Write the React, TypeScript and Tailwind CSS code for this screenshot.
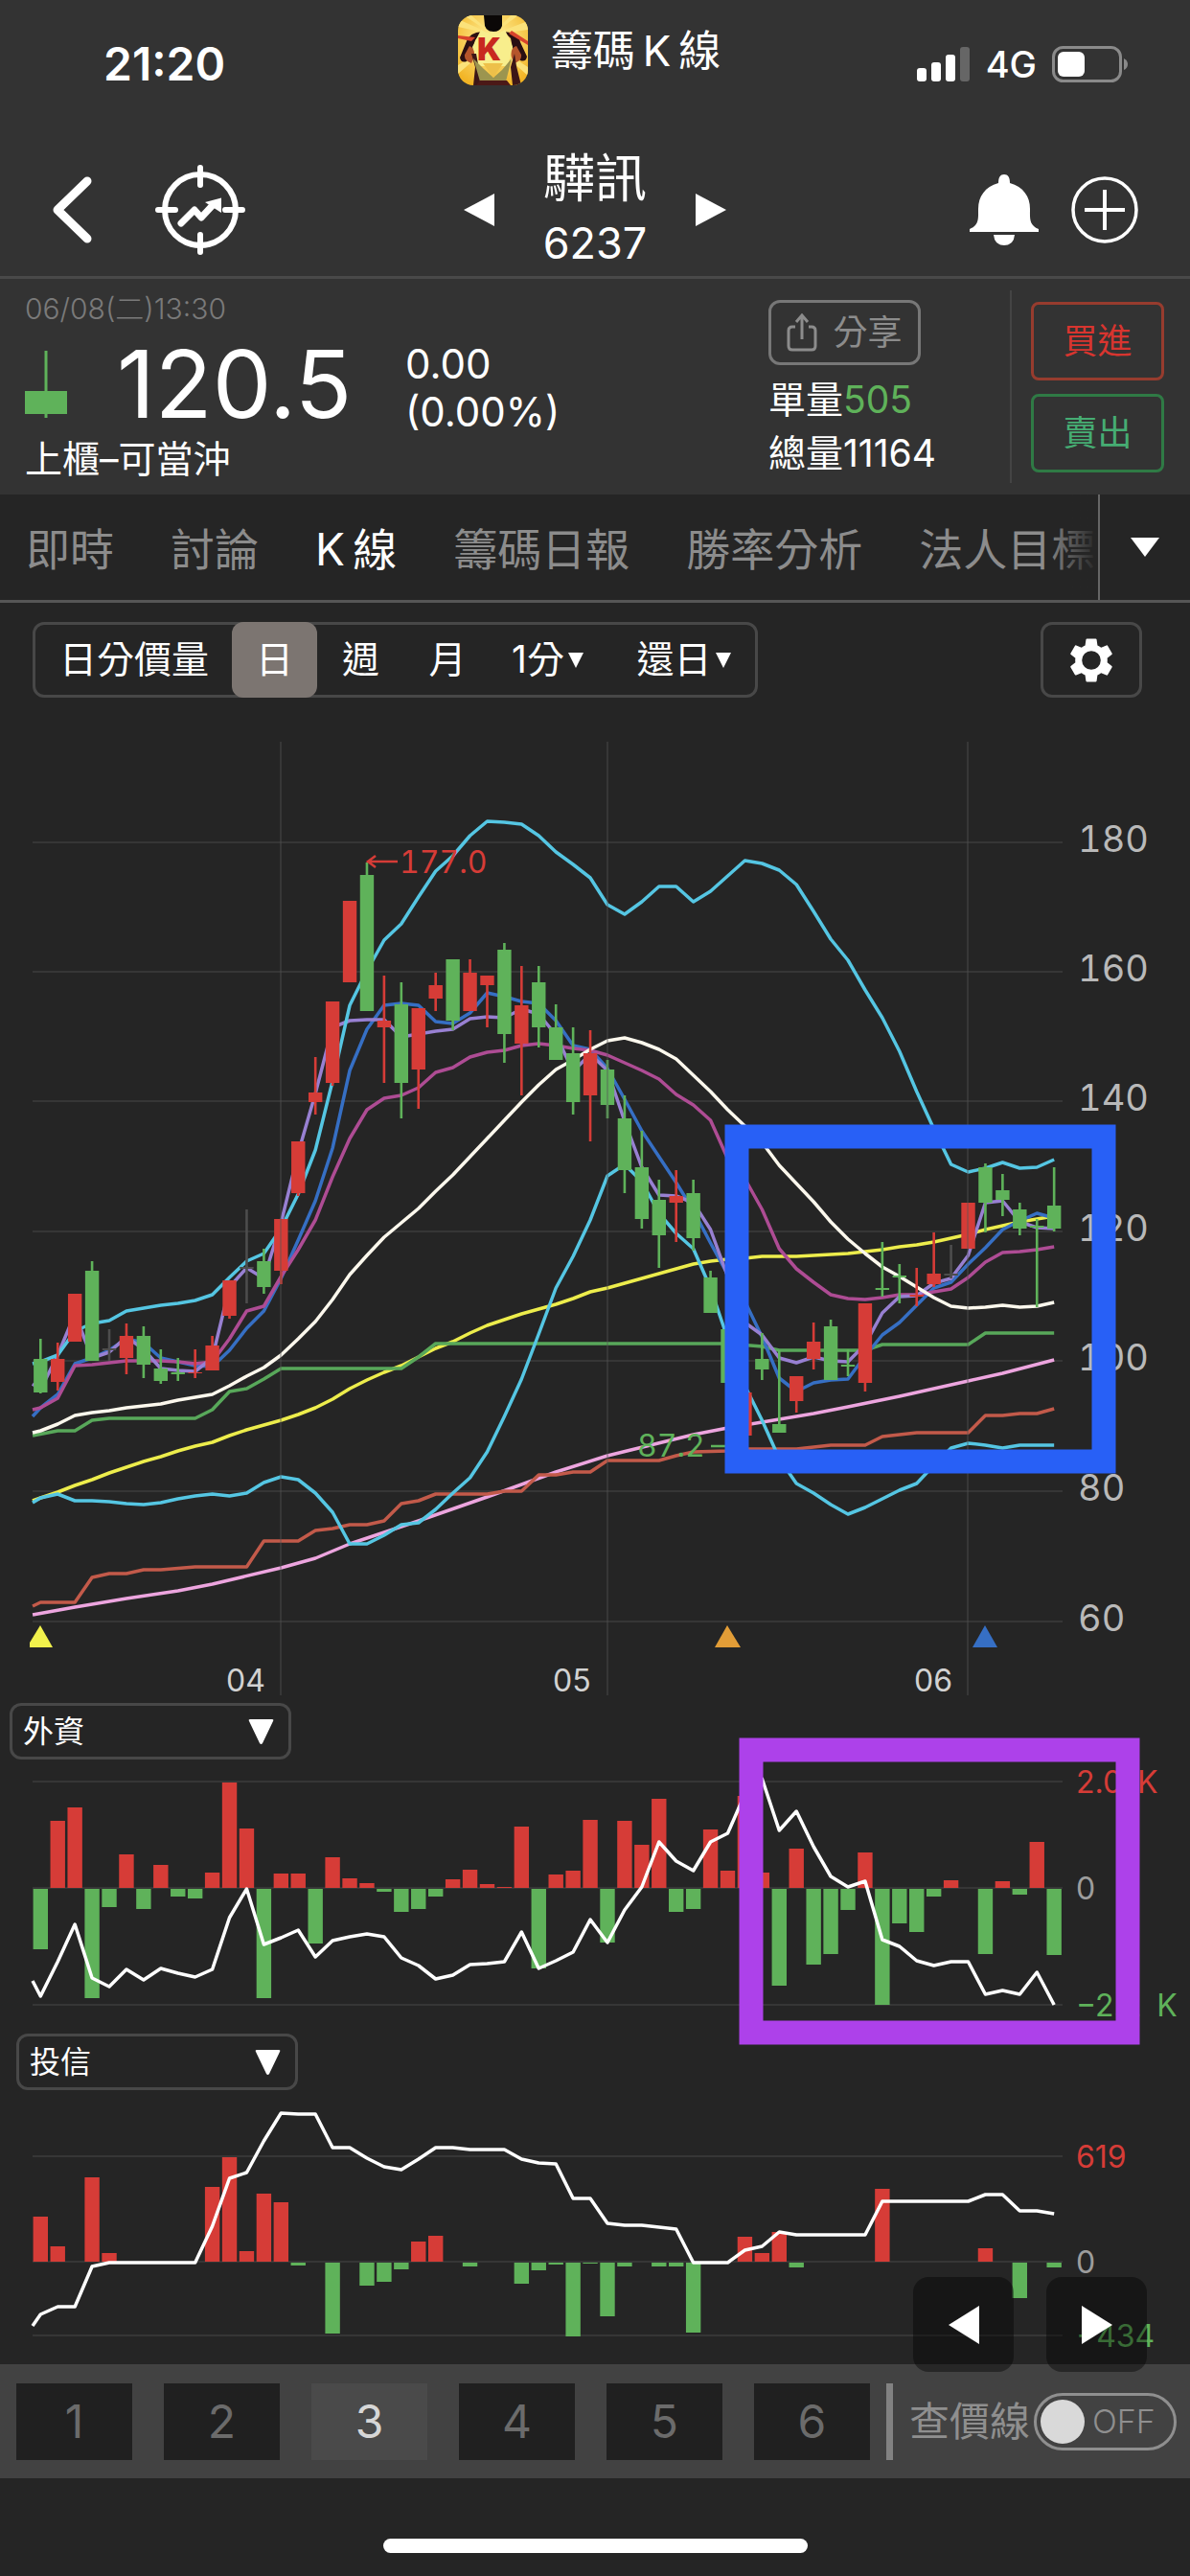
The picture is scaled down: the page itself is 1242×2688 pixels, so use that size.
import { useState } from "react"
import type { ReactNode } from "react"

const RED = "#d63c37"
const GREEN = "#5fb25a"
const GRAY = "#4d4d4d"
const CYAN = "#55c6e3"

const FIRST_X = 42.3
const STEP = 17.93
const LEFT = 34
const RIGHT = 1109

const xAt = (i: number) => FIRST_X + i * STEP

// [high, body top, body bottom, low, kind]
type Candle = [number, number, number, number, "r" | "g" | "n"]

const candles: Candle[] = [
  [1397, 1418, 1453, 1454, "g"],
  [1401, 1418, 1442, 1451, "r"],
  [1350, 1350, 1400, 1400, "r"],
  [1316, 1326, 1420, 1420, "g"],
  [1387, 1407, 1409, 1420, "n"],
  [1381, 1394, 1417, 1434, "r"],
  [1384, 1394, 1424, 1438, "g"],
  [1408, 1428, 1441, 1444, "g"],
  [1417, 1432, 1434, 1441, "g"],
  [1408, 1432, 1433, 1438, "r"],
  [1394, 1404, 1430, 1430, "r"],
  [1336, 1336, 1373, 1376, "r"],
  [1262, 1322, 1324, 1360, "n"],
  [1303, 1316, 1343, 1350, "g"],
  [1272, 1272, 1326, 1340, "r"],
  [1191, 1191, 1245, 1248, "r"],
  [1103, 1140, 1150, 1163, "r"],
  [1045, 1045, 1130, 1133, "r"],
  [940, 940, 1025, 1025, "r"],
  [900, 913, 1055, 1055, "g"],
  [1018, 1065, 1072, 1130, "r"],
  [1025, 1048, 1130, 1167, "g"],
  [1052, 1052, 1116, 1157, "r"],
  [1015, 1028, 1042, 1055, "r"],
  [1001, 1001, 1065, 1075, "g"],
  [1001, 1015, 1055, 1055, "r"],
  [1018, 1018, 1028, 1072, "r"],
  [984, 991, 1079, 1109, "g"],
  [1008, 1049, 1089, 1143, "r"],
  [1008, 1025, 1072, 1093, "g"],
  [1048, 1072, 1106, 1106, "g"],
  [1072, 1099, 1150, 1163, "g"],
  [1075, 1099, 1143, 1191, "r"],
  [1106, 1116, 1153, 1167, "g"],
  [1143, 1167, 1221, 1245, "g"],
  [1180, 1218, 1272, 1282, "g"],
  [1231, 1252, 1289, 1323, "g"],
  [1221, 1248, 1255, 1296, "r"],
  [1231, 1245, 1292, 1305, "g"],
  [1326, 1333, 1370, 1370, "g"],
  [1387, 1387, 1443, 1443, "g"],
  [1453, 1453, 1498, 1498, "r"],
  [1391, 1418, 1429, 1440, "g"],
  [1409, 1486, 1495, 1495, "g"],
  [1436, 1436, 1462, 1474, "r"],
  [1380, 1400, 1418, 1429, "r"],
  [1377, 1384, 1440, 1440, "g"],
  [1408, 1424, 1426, 1436, "g"],
  [1360, 1360, 1443, 1452, "r"],
  [1296, 1344, 1346, 1353, "g"],
  [1319, 1331, 1333, 1360, "g"],
  [1323, 1351, 1353, 1363, "r"],
  [1286, 1329, 1340, 1343, "r"],
  [1299, 1329, 1331, 1334, "n"],
  [1255, 1255, 1303, 1303, "r"],
  [1214, 1218, 1255, 1286, "g"],
  [1225, 1242, 1252, 1269, "g"],
  [1255, 1262, 1282, 1289, "g"],
  [1272, 1279, 1281, 1364, "g"],
  [1218, 1258, 1282, 1285, "g"],
]

// The first value of each series sits on the left edge of the plot, the rest one per candle
const upperBand = [
  1423, 1421, 1414, 1389, 1381, 1378, 1368, 1365, 1362, 1360, 1357, 1351, 1333, 1316, 1308, 1282, 1246, 1200, 1128,
  1049, 1013, 981, 964, 936, 909, 893, 872, 857, 858, 860, 872, 889, 902, 916, 944, 954, 941, 925, 925, 941, 930, 914,
  898, 901, 908, 923, 951, 980, 1002, 1033, 1062, 1097, 1139, 1178, 1215, 1223, 1219, 1213, 1219, 1218, 1210,
]
const lowerBand = [
  1568, 1563, 1559, 1566, 1566, 1567, 1569, 1570, 1568, 1564, 1561, 1559, 1561, 1558, 1547, 1541, 1544, 1558, 1578,
  1611, 1611, 1602, 1591, 1589, 1575, 1558, 1542, 1515, 1478, 1439, 1392, 1344, 1311, 1273, 1227, 1215, 1233, 1266,
  1287, 1303, 1344, 1397, 1446, 1482, 1522, 1548, 1558, 1570, 1580, 1573, 1564, 1555, 1548, 1529, 1511, 1506, 1508,
  1511, 1508, 1508, 1508,
]
const ma5 = [
  1444, 1450, 1414, 1371, 1417, 1411, 1395, 1408, 1428, 1430, 1431, 1417, 1343, 1323, 1334, 1276, 1203, 1141, 1072,
  1065, 1064, 1064, 1082, 1079, 1076, 1074, 1063, 1061, 1062, 1053, 1058, 1080, 1118, 1100, 1117, 1170, 1218, 1247,
  1248, 1255, 1283, 1332, 1380, 1393, 1417, 1422, 1416, 1420, 1421, 1403, 1370, 1353, 1352, 1339, 1334, 1310, 1255,
  1253, 1275, 1281, 1282,
]
const ma10 = [
  1478, 1469, 1455, 1423, 1417, 1409, 1397, 1401, 1417, 1421, 1425, 1426, 1409, 1386, 1368, 1334, 1294, 1253, 1198,
  1117, 1074, 1049, 1047, 1049, 1066, 1068, 1057, 1036, 1040, 1045, 1047, 1065, 1091, 1095, 1115, 1147, 1180, 1207,
  1234, 1263, 1297, 1330, 1358, 1395, 1438, 1452, 1443, 1440, 1439, 1415, 1393, 1380, 1362, 1344, 1338, 1319, 1302,
  1283, 1274, 1266, 1271,
]
const ma20 = [
  1471, 1469, 1459, 1425, 1424, 1422, 1420, 1420, 1420, 1421, 1423, 1421, 1397, 1368, 1363, 1332, 1304, 1273, 1228,
  1188, 1158, 1146, 1143, 1135, 1119, 1114, 1103, 1098, 1096, 1091, 1089, 1091, 1094, 1096, 1101, 1109, 1117, 1126,
  1142, 1153, 1169, 1209, 1230, 1262, 1303, 1324, 1338, 1351, 1355, 1356, 1354, 1351, 1351, 1348, 1345, 1333, 1317,
  1307, 1306, 1304, 1301,
]
const middleBand = [
  1495, 1493, 1486, 1477, 1474, 1472, 1469, 1467, 1465, 1461, 1458, 1455, 1446, 1436, 1427, 1414, 1397, 1379, 1356,
  1330, 1310, 1291, 1276, 1261, 1243, 1226, 1207, 1188, 1169, 1150, 1132, 1116, 1106, 1095, 1086, 1083, 1088, 1095,
  1105, 1122, 1139, 1158, 1175, 1192, 1216, 1235, 1254, 1275, 1293, 1308, 1322, 1332, 1343, 1354, 1363, 1365, 1364,
  1362, 1364, 1363, 1359,
]
const ma60 = [
  1566, 1563, 1557, 1550, 1544, 1537, 1531, 1525, 1520, 1514, 1509, 1505, 1498, 1492, 1487, 1482, 1476, 1469, 1460,
  1449, 1440, 1432, 1425, 1416, 1407, 1400, 1391, 1383, 1377, 1371, 1366, 1361, 1355, 1348, 1344, 1339, 1334, 1329,
  1324, 1319, 1316, 1314, 1313, 1311, 1311, 1311, 1310, 1309, 1308, 1306, 1304, 1301, 1299, 1296, 1292, 1288, 1283,
  1279, 1275, 1272, 1269,
]

// Slow series only list their turning points as [candle, y]
type Pair = [number, number]

const quarterLine: Pair[] = [
  [-0.46, 1498], [1, 1493], [2, 1493], [3, 1482], [4, 1480], [9, 1480], [10, 1471], [11, 1452], [12, 1449], [13, 1439],
  [14, 1428], [21, 1428], [22, 1416], [23, 1402], [40, 1402], [42, 1405], [43, 1409], [48, 1409], [49, 1403], [54, 1403],
  [55, 1391], [59, 1391],
]
const halfYearLine: Pair[] = [
  [-0.46, 1685], [2, 1677], [5, 1668], [8, 1660], [10, 1653], [14, 1636], [16, 1626], [18, 1611], [22, 1587], [26, 1562],
  [30, 1536], [33, 1519], [38, 1497], [40, 1490], [42, 1484], [45, 1475], [47, 1468], [50, 1457], [54, 1441], [56, 1433],
  [59, 1419],
]
const yearLine: Pair[] = [
  [-0.46, 1676], [0, 1672], [2, 1672], [3, 1646], [4, 1642], [5, 1642], [6, 1638], [7, 1638], [9, 1635], [12, 1635],
  [13, 1608], [15, 1608], [16, 1597], [17, 1595], [18, 1591], [19, 1591], [20, 1587], [21, 1569], [22, 1566], [23, 1559],
  [26, 1559], [27, 1556], [28, 1556], [29, 1539], [30, 1539], [31, 1536], [32, 1536], [33, 1524], [36, 1524], [37, 1519],
  [38, 1515], [40, 1514], [41, 1512], [44, 1512], [45, 1510], [46, 1508], [48, 1508], [49, 1499], [50, 1497], [51, 1495],
  [54, 1495], [55, 1477], [56, 1477], [57, 1475], [58, 1475], [59, 1470],
]

const foreignBars = [
  -63, 70, 84, -114, -19, 35, -21, 24, -8, -10, 16, 110, 62, -114, 15, 15, -57, 32, 10, 5, -3, -24, -21, -8, 9, 19, 4, 1,
  64, -83, 14, 18, 71, -56, 70, 45, 93, -24, -21, 61, 18, 96, 16, -101, 41, -79, -68, -22, 37, -121, -36, -45, -8, 8, 0,
  -68, 7, -6, 48, -69,
]
const foreignHolding = [
  2067, 2083, 2047, 2008, 2064, 2073, 2055, 2066, 2054, 2059, 2063, 2055, 2001, 1971, 2029, 2022, 2014, 2042, 2025,
  2021, 2018, 2021, 2043, 2051, 2065, 2061, 2050, 2049, 2047, 2016, 2054, 2046, 2037, 2003, 2027, 1993, 1969, 1922,
  1942, 1952, 1922, 1913, 1872, 1856, 1910, 1890, 1927, 1958, 1969, 1963, 2024, 2031, 2046, 2051, 2047, 2047, 2081,
  2077, 2081, 2058, 2092,
]
const trustBars = [
  47, 16, 0, 88, 9, 0, 0, 0, 0, 0, 78, 109, 11, 71, 62, -3, 0, -74, 0, -24, -20, -7, 21, 27, 0, -4, 0, 0, -22, -8, -2,
  -77, -1, -56, -4, 0, -4, -4, -73, 0, 0, 26, 9, 31, -5, 0, 0, 0, 0, 76, 0, 0, 0, 0, 0, 14, 0, -37, 0, -5,
]
const trustHolding = [
  2427, 2415, 2407, 2407, 2365, 2361, 2361, 2361, 2361, 2361, 2361, 2323, 2273, 2267, 2234, 2205, 2206, 2206, 2241,
  2241, 2252, 2261, 2264, 2253, 2241, 2241, 2243, 2243, 2243, 2253, 2257, 2258, 2294, 2294, 2320, 2322, 2322, 2324,
  2326, 2361, 2361, 2361, 2348, 2344, 2329, 2332, 2332, 2332, 2332, 2332, 2297, 2297, 2297, 2297, 2297, 2297, 2290,
  2290, 2307, 2307, 2310,
]

const priceTicks = [
  { label: "180", y: 879 },
  { label: "160", y: 1014 },
  { label: "140", y: 1149 },
  { label: "120", y: 1285 },
  { label: "100", y: 1420 },
  { label: "80", y: 1556 },
  { label: "60", y: 1692 },
]

const months = [
  { label: "04", x: 293, labelX: 236 },
  { label: "05", x: 634, labelX: 577 },
  { label: "06", x: 1010, labelX: 954 },
]

const toPoints = (ys: number[]) => ys.map((y, i) => `${i === 0 ? LEFT : xAt(i - 1)},${y}`).join(" ")
const pairPoints = (pairs: Pair[]) => pairs.map(([i, y]) => `${xAt(i)},${y}`).join(" ")

function Trace({ points, color, width = 3.5 }: { points: string; color: string; width?: number }) {
  return <polyline points={points} fill="none" stroke={color} strokeWidth={width} strokeLinejoin="round" />
}

function PriceChart() {
  return (
    <svg viewBox="0 728 1242 1049" className="block w-full" role="img" aria-label="K線圖">
      <g stroke="#363636" strokeWidth="2">
        {priceTicks.map((t) => (
          <line key={t.label} x1={LEFT} x2={RIGHT} y1={t.y} y2={t.y} />
        ))}
      </g>

      <Trace points={pairPoints(halfYearLine)} color="#eda5df" />
      <Trace points={pairPoints(yearLine)} color="#c35a4a" />
      <Trace points={toPoints(ma60)} color="#eded4c" />
      <Trace points={pairPoints(quarterLine)} color="#58a85a" />
      <Trace points={toPoints(ma10)} color="#366fc4" />
      <Trace points={toPoints(ma20)} color="#ae4c94" />
      <Trace points={toPoints(ma5)} color="#9880d2" />
      <Trace points={toPoints(upperBand)} color={CYAN} />
      <Trace points={toPoints(lowerBand)} color={CYAN} />
      <Trace points={toPoints(middleBand)} color="#fcf8ed" />

      {candles.map(([high, top, bottom, low, kind], i) => {
        const color = kind === "r" ? RED : kind === "g" ? GREEN : GRAY
        return (
          <g key={i} fill={color}>
            <rect x={xAt(i) - 1.3} y={high} width="2.6" height={low - high} />
            <rect x={xAt(i) - 7.2} y={top} width="14.4" height={bottom - top} />
          </g>
        )
      })}

      {months.map((m) => (
        <g key={m.label}>
          <line x1={m.x} x2={m.x} y1="774" y2="1769" stroke="#555" strokeOpacity=".5" strokeWidth="1.5" />
          <text x={m.labelX} y="1765" fontSize="32" fill="#d2d2d2">
            {m.label}
          </text>
        </g>
      ))}

      <path d="M392 893l-8 6 8 6M385 899h30" fill="none" stroke={RED} strokeWidth="2.5" />
      <text x="417" y="911" fontSize="32" fill={RED} className="tabular-nums">
        177.0
      </text>
      <path d="M742 1509h20" stroke={GREEN} strokeWidth="2.5" />
      <text x="665" y="1520" fontSize="32" fill={GREEN} className="tabular-nums">
        87.2
      </text>

      {priceTicks.map((t) => (
        <text key={t.label} x="1125" y={t.y + 10} fontSize="38" fill="#b9b9b9" className="tabular-nums">
          {t.label}
        </text>
      ))}

      <path d="M31 1719v-5l11-18 13 23z" fill="#f1f14c" />
      <path d="M746 1719l13-23 14 23z" fill="#e29d37" />
      <path d="M1015 1719l13-23 13 23z" fill="#366fc4" />

      <rect x="769" y="1186" width="383" height="339" fill="none" stroke="#2860f6" strokeWidth="25" />
    </svg>
  )
}

type FlowChartProps = {
  top: number
  zero: number
  grid: [number, number]
  bars: number[]
  line: number[]
  labels: [string, string, string]
  name: string
  children?: ReactNode
}

function FlowChart({ top, zero, grid, bars, line, labels, name, children }: FlowChartProps) {
  return (
    <svg viewBox={`0 ${top} 1242 286`} className="block w-full overflow-visible" role="img" aria-label={name}>
      <g stroke="#363636" strokeWidth="2">
        {[grid[0], zero, grid[1]].map((y) => (
          <line key={y} x1={LEFT} x2={RIGHT} y1={y} y2={y} />
        ))}
      </g>
      {bars.map((v, i) =>
        v === 0 ? null : (
          <rect
            key={i}
            x={xAt(i) - 7.7}
            y={v > 0 ? zero - v : zero + 1}
            width="15.4"
            height={Math.abs(v)}
            fill={v > 0 ? RED : GREEN}
          />
        ),
      )}
      <Trace points={toPoints(line)} color="#fff" />
      <g fontSize="32">
        <text x="1123" y={grid[0] + 12} fill={RED}>
          {labels[0]}
        </text>
        <text x="1123" y={zero + 12} fill="#9d9d9d">
          {labels[1]}
        </text>
        <text x="1123" y={grid[1] + 12} fill={GREEN}>
          {labels[2]}
        </text>
      </g>
      {children}
    </svg>
  )
}

function IndicatorSelect({ options, label }: { options: string[]; label: string }) {
  return (
    <div className="relative h-[59px] w-[294px]">
      <select
        aria-label={label}
        className="h-full w-full appearance-none rounded-xl border-[3px] border-[#484848] bg-[#252525] pl-[11px] text-[32px] leading-none text-white"
      >
        {options.map((o) => (
          <option key={o}>{o}</option>
        ))}
      </select>
      <svg viewBox="0 0 27 28" className="pointer-events-none absolute top-4 right-[18px] h-7 w-[27px]">
        <path d="M2 1h23q2 0 1 2L15 26q-1.500 2-3 0L1 3q-1-2 1-2z" fill="#fff" />
      </svg>
    </div>
  )
}

function Triangle({ dir, className }: { dir: "left" | "right"; className: string }) {
  return (
    <svg viewBox="0 0 32 40" preserveAspectRatio="none" className={className}>
      <path d={dir === "left" ? "M32 0v40L0 20z" : "M0 0v40l32-20z"} fill="#fff" />
    </svg>
  )
}

function AppIcon() {
  return (
    <svg viewBox="0 0 73 73" className="size-[73px] rounded-2xl">
      <defs>
        <radialGradient id="sun" cx=".5" cy=".35" r=".7">
          <stop offset="0" stopColor="#fff3a0" />
          <stop offset="1" stopColor="#f2b424" />
        </radialGradient>
      </defs>
      <rect width="73" height="73" fill="url(#sun)" />
      <path
        d="M36 20L0 4v8zM36 20L14 0h-8zM36 20L55 0h8zM36 20l37-14v9zM36 30L0 52v9zM36 30l37 24v9z"
        fill="#fbe27a"
      />
      <path d="M27 0h19v11q-2 6-9 6t-9-6z" fill="#0b0807" />
      <path d="M25 17q-13 1-16 10L2 44q1 6 7 4l5-7 4-15zM48 17q15 1 17 11l7 15q-1 6-7 4l-7-8-3-15z" fill="#2a0f12" />
      <path d="M0 24l14 3 4-4-18-2zM73 27l-17-11-3 3 20 12z" fill="#d8432c" />
      <path d="M24 15q13 8 25 0l8 18-5 20H20l-5-20z" fill="#f8ee8c" />
      <path d="M12 32q6 2 5 12l-3 6q-8-3-7-9zM61 32q-7 2-5 12l3 6q8-3 7-9z" fill="#b5552b" />
      <path d="M14 40l4 14-2 19h9l-6-33zM59 40l-4 14 2 19h9l-5-20z" fill="#3c1617" />
      <path d="M16 45l7 24h27l6-24-10 12-9 8-10-9z" fill="#9c954f" />
      <path d="M26 50l11 15 10-15z" fill="#edc04a" />
      <path d="M19 73l4-5h28l4 5z" fill="#4b1917" />
      <text x="20" y="47" fontSize="33" fontWeight="900" fill="#c8281f">
        K
      </text>
    </svg>
  )
}

function StatusBar() {
  return (
    <div className="grid h-[134px] grid-cols-[1fr_auto_1fr] items-center px-16">
      <span className="pl-11 text-[48px] leading-none font-semibold">21:20</span>
      <div className="flex items-center gap-6 self-start pt-4 pr-3">
        <AppIcon />
        <span className="text-[44px] leading-[60px] whitespace-nowrap">籌碼{"\u2009"}K{"\u2009"}線</span>
      </div>
      <div className="flex items-center gap-4 justify-self-end">
        <svg viewBox="0 0 56 36" className="h-9 w-14">
          <rect y="22" width="10" height="14" rx="3" fill="#fff" />
          <rect x="15" y="16" width="10" height="20" rx="3" fill="#fff" />
          <rect x="30" y="8" width="10" height="28" rx="3" fill="#fff" />
          <rect x="45" width="10" height="36" rx="3" fill="#666" />
        </svg>
        <span className="text-[38px] leading-none font-medium">4G</span>
        <svg viewBox="0 0 80 38" className="h-[38px] w-20">
          <rect x="1.500" y="1.500" width="70" height="35" rx="10" fill="none" stroke="#8a8a8a" strokeWidth="3" />
          <path d="M75 13q4 2 4 6t-4 6z" fill="#8a8a8a" />
          <rect x="6" y="6" width="28" height="26" rx="6" fill="#fff" />
        </svg>
      </div>
    </div>
  )
}

function NavBar() {
  return (
    <div className="grid h-[157px] grid-cols-[1fr_auto_1fr] items-center border-b-[3px] border-[#494949] px-[54px] pt-4">
      <div className="flex items-center gap-[66px]">
        <button aria-label="返回">
          <svg viewBox="0 0 42 70" className="h-[70px] w-[42px]">
            <path d="M37 5L6 35l31 30" fill="none" stroke="#fff" strokeWidth="9" strokeLinecap="round" strokeLinejoin="round" />
          </svg>
        </button>
        <button aria-label="目標">
          <svg viewBox="0 0 94 94" className="size-[94px]">
            <circle cx="47" cy="47" r="37" fill="none" stroke="#fff" strokeWidth="6" />
            <path d="M47 3v18M47 73v18M3 47h18M73 47h18" stroke="#fff" strokeWidth="6" strokeLinecap="round" />
            <path d="M27 61l14-14 7 8 13-14" fill="none" stroke="#fff" strokeWidth="7" strokeLinecap="round" strokeLinejoin="round" />
            <path d="M52 39l17-4.500V50z" fill="#fff" />
          </svg>
        </button>
      </div>
      <div className="flex items-center gap-[51px]">
        <button aria-label="上一檔">
          <Triangle dir="left" className="h-[34px] w-8" />
        </button>
        <h1 className="pt-1 text-center font-normal">
          <span className="block text-[54px] leading-[66px]">驊訊</span>
          <span className="block text-[45px] leading-[68px]">6237</span>
        </h1>
        <button aria-label="下一檔">
          <Triangle dir="right" className="h-[34px] w-8" />
        </button>
      </div>
      <div className="flex items-center gap-[34px] justify-self-end">
        <button aria-label="通知">
          <svg viewBox="0 0 72 74" className="h-[74px] w-[72px]">
            <path
              d="M36 0c4 0 6 3 6 9 14 4 21 14 21 27 0 10-1 17 9 21v3H0v-3c10-4 9-11 9-21C9 23 16 13 30 9c0-6 2-9 6-9zM25 63h22q-1 11-11 11T25 63z"
              fill="#fff"
            />
          </svg>
        </button>
        <button aria-label="加入自選">
          <svg viewBox="0 0 70 70" className="size-[70px]">
            <circle cx="35" cy="35" r="33" fill="none" stroke="#fff" strokeWidth="3.500" />
            <path d="M35 14v42M14 35h42" stroke="#fff" strokeWidth="4" />
          </svg>
        </button>
      </div>
    </div>
  )
}

function QuotePanel() {
  return (
    <section className="flex h-[225px] bg-[#333]">
      <div className="flex flex-1 flex-col pt-[10px] pl-[26px]">
        <span className="text-[30px] leading-[42px] font-light text-[#7a7a7a]">06/08(二)13:30</span>
        <div className="flex items-center pt-1">
          <svg viewBox="0 0 44 70" className="h-[70px] w-11">
            <path d="M22 0v70" stroke={GREEN} strokeWidth="3" />
            <rect y="42" width="44" height="24" fill={GREEN} />
          </svg>
          <span className="w-[353px] pl-[52px] text-[98px] leading-[104px]">120.5</span>
          <span className="pt-2 text-[42px] leading-[50px]">
            0.00
            <br />
            (0.00%)
          </span>
        </div>
        <span className="text-[39px] leading-[48px]">上櫃–可當沖</span>
      </div>
      <div className="flex w-[252px] flex-col pt-[22px] text-[39px] leading-[56px]">
        <button className="mb-2 flex h-[68px] w-[159px] items-center justify-center gap-4 rounded-xl border-[3px] border-[#777] text-[36px] text-[#8c8c8c]">
          <svg viewBox="0 0 32 40" className="h-10 w-8" fill="none" stroke="#8c8c8c" strokeWidth="3">
            <path d="M9 14H6q-4 0-4 4v16q0 4 4 4h20q4 0 4-4V18q0-4-4-4h-3M16 27V3M10 9l6-7 6 7" />
          </svg>
          分享
        </button>
        <span>
          單量<span className="text-[#5fb25a]">505</span>
        </span>
        <span>總量11164</span>
      </div>
      <div className="my-3 flex flex-col gap-[14px] border-l-2 border-[#444] pt-3 pr-[27px] pl-5 text-[36px]">
        <button className="h-[82px] w-[139px] rounded-lg border-[3px] border-[#973c2e] text-[#d8352f]">買進</button>
        <button className="h-[82px] w-[139px] rounded-lg border-[3px] border-[#2f7a45] text-[#46ad73]">賣出</button>
      </div>
    </section>
  )
}

const tabs = ["即時", "討論", "K\u2009線", "籌碼日報", "勝率分析", "法人目標"]

function TabBar() {
  const [active, setActive] = useState(tabs[2])
  return (
    <nav className="flex h-[113px] border-b-[3px] border-[#565656]">
      <div className="relative flex flex-1 items-center gap-[59px] overflow-hidden pt-1 pl-[27px]">
        {tabs.map((t) => (
          <button
            key={t}
            onClick={() => setActive(t)}
            className={`shrink-0 text-[46px] whitespace-nowrap ${t === active ? "text-white" : "text-[#8c8c8c]"}`}
          >
            {t}
          </button>
        ))}
        <div className="pointer-events-none absolute inset-y-0 right-0 w-14 bg-linear-to-r from-transparent to-[#252525]" />
      </div>
      <button aria-label="更多" className="flex w-24 items-center justify-center border-l-2 border-[#666]">
        <svg viewBox="0 0 30 20" className="h-5 w-[30px]">
          <path d="M0 0h30L15 20z" fill="#fff" />
        </svg>
      </button>
    </nav>
  )
}

function Caret() {
  return (
    <svg viewBox="0 0 16 16" className="h-4 w-4">
      <path d="M0 0h16L8 16z" fill="#fff" />
    </svg>
  )
}

function PeriodBar() {
  return (
    <div className="flex items-start justify-between pt-5 pr-[50px] pl-[34px]">
      <div className="flex h-[79px] rounded-xl border-[3px] border-[#484848] text-[39px]">
        <button className="pr-6 pl-[25px]">日分價量</button>
        <button className="-my-[3px] w-[89px] rounded-xl bg-[#7c7571]">日</button>
        <button className="w-[91px]">週</button>
        <button className="w-[90px]">月</button>
        <button className="flex w-[119px] items-center justify-center gap-1">
          1分
          <Caret />
        </button>
        <button className="flex w-[157px] items-center justify-center gap-1 pl-2">
          還日
          <Caret />
        </button>
      </div>
      <button aria-label="設定" className="flex h-[79px] w-[106px] items-center justify-center rounded-xl border-[3px] border-[#484848]">
        <svg viewBox="0 0 24 24" className="size-14">
          <path
            d="M19.140 12.940c.04-.3.060-.61.060-.94s-.02-.64-.07-.94l2.030-1.580a.49.49 0 0 0 .12-.61l-1.920-3.320a.49.49 0 0 0-.59-.22l-2.390.96a7 7 0 0 0-1.620-.94l-.36-2.540A.48.48 0 0 0 13.920 2.400h-3.840a.48.48 0 0 0-.47.41l-.36 2.540c-.59.24-1.130.57-1.620.94l-2.390-.96a.48.48 0 0 0-.59.22L2.740 8.870a.48.48 0 0 0 .12.61l2.030 1.580c-.05.3-.09.63-.09.94s.02.64.070.94l-2.030 1.580a.49.49 0 0 0-.12.61l1.920 3.320c.12.22.37.29.59.22l2.390-.96c.5.38 1.030.7 1.620.94l.36 2.540c.05.24.24.41.48.41h3.840c.24 0 .44-.17.47-.41l.36-2.540a7 7 0 0 0 1.620-.94l2.390.96c.22.080.47 0 .59-.22l1.920-3.320a.48.48 0 0 0-.12-.61zM12 16.200a4.200 4.200 0 1 1 0-8.400 4.200 4.200 0 0 1 0 8.400z"
            fill="#fff"
          />
        </svg>
      </button>
    </div>
  )
}

function BottomBar() {
  const [page, setPage] = useState(3)
  return (
    <div className="flex h-[119px] items-center bg-[#424242] pr-[14px] pl-[17px]">
      <div className="flex flex-1 justify-between pr-[17px]">
        {[1, 2, 3, 4, 5, 6].map((n) => (
          <button
            key={n}
            onClick={() => setPage(n)}
            className={`h-20 w-[121px] text-[48px] ${n === page ? "bg-[#4a4a4a] text-[#d6d6d6]" : "bg-[#202020] text-[#6b6b6b]"}`}
          >
            {n}
          </button>
        ))}
      </div>
      <div className="h-20 w-[7px] bg-[#828282]" />
      <label className="flex items-center gap-1 pl-[17px] text-[42px] text-[#8f8f8f]">
        查價線
        <span className="relative flex h-[60px] w-[149px] items-center rounded-full border-[3px] border-[#8f8f8f] pl-1">
          <input type="checkbox" className="absolute inset-0 cursor-pointer appearance-none" />
          <span className="size-[46px] rounded-full bg-[#d9d9d9]" />
          <span className="pl-2 text-[34px] font-light">OFF</span>
        </span>
      </label>
    </div>
  )
}

export default function App() {
  return (
    <div className="flex min-h-screen flex-col bg-[#252525] font-[Inter,'Noto_Sans_CJK_TC',sans-serif] text-white">
      <header className="bg-[#333]">
        <StatusBar />
        <NavBar />
      </header>
      <QuotePanel />
      <TabBar />
      <PeriodBar />

      <main>
        <PriceChart />
        <div className="pl-[10px]">
          <IndicatorSelect label="指標一" options={["外資"]} />
        </div>
        <FlowChart
          name="外資買賣超"
          top={1836}
          zero={1970}
          grid={[1859, 2092]}
          bars={foreignBars}
          line={foreignHolding}
          labels={["2.0\u2002K", "0", "−2.2\u2002K"]}
        >
          <rect x="784" y="1826" width="393" height="295" fill="none" stroke="#ad41ea" strokeWidth="25" />
        </FlowChart>
        <div className="pl-[17px]">
          <IndicatorSelect label="指標二" options={["投信"]} />
        </div>
        <div className="relative">
          <FlowChart
            name="投信買賣超"
            top={2181}
            zero={2360}
            grid={[2250, 2437]}
            bars={trustBars}
            line={trustHolding}
            labels={["619", "0", "−434"]}
          />
          <div className="absolute right-[45px] -bottom-2 z-10 flex gap-[34px]">
            <button aria-label="往前" className="flex h-[99px] w-[105px] items-center justify-center rounded-2xl bg-black/40">
              <Triangle dir="left" className="h-10 w-8" />
            </button>
            <button aria-label="往後" className="flex h-[99px] w-[105px] items-center justify-center rounded-2xl bg-black/40">
              <Triangle dir="right" className="h-10 w-8" />
            </button>
          </div>
        </div>
      </main>

      <BottomBar />
      <div className="flex flex-1 items-end justify-center pb-6">
        <div className="h-[15px] w-[443px] rounded-full bg-white" />
      </div>
    </div>
  )
}
